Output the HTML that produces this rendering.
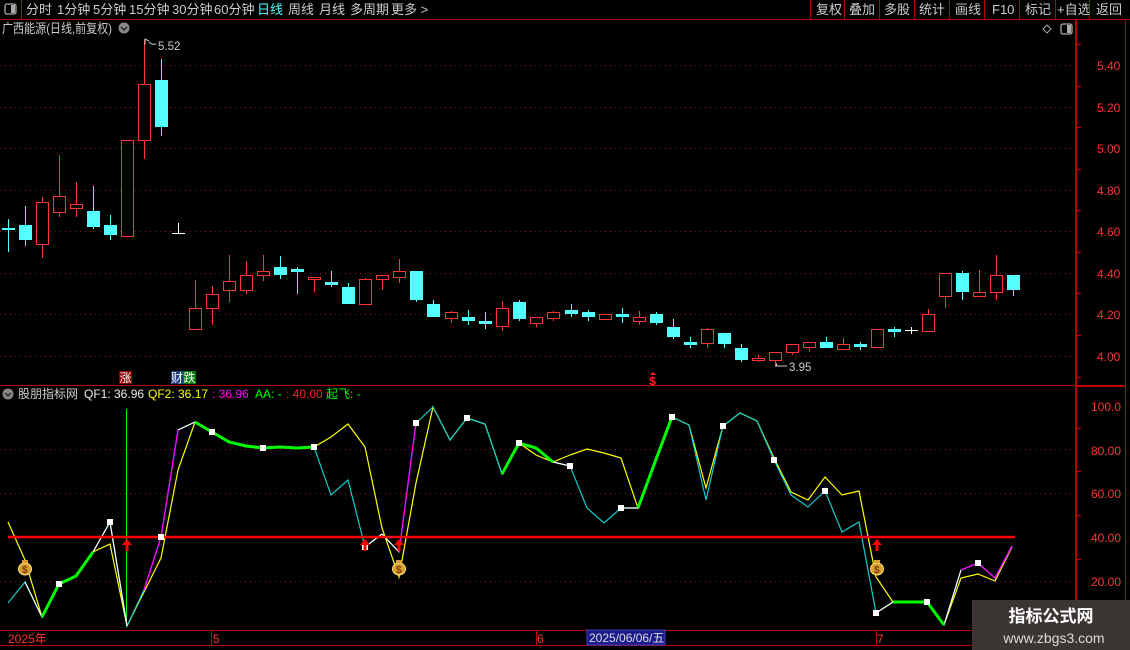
<!DOCTYPE html>
<html><head><meta charset="utf-8"><style>
body{margin:0;background:#000;width:1130px;height:650px;overflow:hidden;font-family:"Liberation Sans","Noto Sans CJK SC",sans-serif}
svg{position:absolute;left:0;top:0}
.t{font-family:"Liberation Sans","Noto Sans CJK SC",sans-serif}
</style></head><body>
<svg id="s" width="1130" height="650" xmlns="http://www.w3.org/2000/svg">
<rect x="0" y="0" width="1130" height="19" fill="#000"/>
<line x1="0" y1="19.5" x2="1130" y2="19.5" stroke="#b00" />
<line x1="21.5" y1="0" x2="21.5" y2="19" stroke="#b00"/>
<rect x="5" y="4" width="11" height="10" rx="2" fill="none" stroke="#aaa" stroke-width="1.3"/>
<rect x="11" y="5" width="4" height="8" fill="#aaa"/>
<g class="t" font-size="13" fill="#ccc">
<text x="26" y="14">分时</text><text x="57" y="14">1分钟</text><text x="93" y="14">5分钟</text><text x="129" y="14">15分钟</text><text x="172" y="14">30分钟</text><text x="214" y="14">60分钟</text>
<text x="257" y="14" fill="#4ff">日线</text><text x="288" y="14">周线</text><text x="319" y="14">月线</text><text x="350" y="14">多周期</text><text x="391" y="14">更多 &gt;</text>
<text x="816" y="14">复权</text><text x="849" y="14">叠加</text><text x="884" y="14">多股</text><text x="919" y="14">统计</text><text x="955" y="14">画线</text><text x="992" y="14">F10</text><text x="1025" y="14">标记</text><text x="1057" y="14">+自选</text><text x="1096" y="14">返回</text>
</g>
<g stroke="#b00"><line x1="810.5" y1="0" x2="810.5" y2="19"/><line x1="844.5" y1="0" x2="844.5" y2="19"/><line x1="879.5" y1="0" x2="879.5" y2="19"/><line x1="914.5" y1="0" x2="914.5" y2="19"/><line x1="949.5" y1="0" x2="949.5" y2="19"/><line x1="984.5" y1="0" x2="984.5" y2="19"/><line x1="1019.5" y1="0" x2="1019.5" y2="19"/><line x1="1055.5" y1="0" x2="1055.5" y2="19"/><line x1="1089.5" y1="0" x2="1089.5" y2="19"/></g>
<text x="2" y="33" class="t" font-size="13" fill="#ccc" textLength="110" lengthAdjust="spacingAndGlyphs">广西能源(日线,前复权)</text>
<circle cx="124" cy="28" r="5.5" fill="#888"/><path d="M121 27 L124 30 L127 27" stroke="#222" stroke-width="1.5" fill="none"/>
<path d="M1047 25 L1051 29 L1047 33 L1043 29Z" fill="none" stroke="#aaa"/>
<rect x="1061" y="24" width="11" height="10" rx="2" fill="none" stroke="#aaa" stroke-width="1.3"/><rect x="1067" y="25" width="4" height="8" fill="#aaa"/>
<g shape-rendering="crispEdges">
<line x1="1076" y1="20" x2="1076" y2="650" stroke="#b00" stroke-width="2"/>
<line x1="1125.5" y1="20" x2="1125.5" y2="650" stroke="#b00"/>
<line x1="0" y1="385.5" x2="1076" y2="385.5" stroke="#b00"/>
<line x1="1076" y1="386" x2="1125" y2="386" stroke="#b00" stroke-width="2"/>
<line x1="0" y1="630.5" x2="1076" y2="630.5" stroke="#b00"/>
<line x1="0" y1="645.5" x2="1076" y2="645.5" stroke="#b00"/>
</g>
<g id="grid" stroke="#8a1a1a" stroke-dasharray="1,4"></g>
<g class="t" font-size="12" fill="#f33">
<text x="1097" y="70">5.40</text><text x="1097" y="112">5.20</text><text x="1097" y="153">5.00</text><text x="1097" y="195">4.80</text><text x="1097" y="236">4.60</text><text x="1097" y="278">4.40</text><text x="1097" y="319">4.20</text><text x="1097" y="361">4.00</text>
<text x="1091" y="411">100.0</text><text x="1091" y="455">80.00</text><text x="1091" y="498">60.00</text><text x="1091" y="542">40.00</text><text x="1091" y="586">20.00</text>
<text x="8" y="643">2025年</text><text x="213" y="643">5</text><text x="537" y="643">6</text><text x="877" y="643">7</text>
</g>
<g stroke="#b00"><line x1="211.5" y1="630" x2="211.5" y2="645"/><line x1="536.5" y1="630" x2="536.5" y2="645"/><line x1="876.5" y1="630" x2="876.5" y2="645"/></g>
<rect x="587" y="630" width="78" height="15" fill="#1a1a8c" stroke="#4040c0"/>
<text x="589" y="642" class="t" font-size="12" fill="#ddd">2025/06/06/五</text>
<g id="ticks" stroke="#b00" shape-rendering="crispEdges"></g>
<g id="c" shape-rendering="crispEdges"></g>
<path d="M145 45 L145 39 L149 41" stroke="#ccc" fill="none"/><path d="M149 42 Q152 45 156 44" stroke="#ccc" fill="none"/>
<text x="158" y="50" class="t" font-size="11.5" fill="#ccc">5.52</text>
<path d="M776 363 L777 366 M775 366 L787 366" stroke="#ccc" fill="none"/>
<text x="789" y="371" class="t" font-size="11.5" fill="#ccc">3.95</text>
<rect x="119" y="371" width="13" height="13" fill="#8b0000"/><text x="119.5" y="382" class="t" font-size="12" fill="#fff">涨</text>
<rect x="171" y="371" width="12" height="13" fill="#1e3c78"/><text x="171" y="382" class="t" font-size="12" fill="#fff">财</text>
<rect x="183" y="371" width="13" height="13" fill="#007a00"/><text x="183.5" y="382" class="t" font-size="12" fill="#fff">跌</text>
<path d="M650 375 L653 372 L656 375Z" fill="#f22"/>
<text x="649" y="385" font-family="Liberation Mono,monospace" font-size="12" font-weight="bold" fill="#f22">$</text>
<circle cx="8" cy="394" r="5.5" fill="#888"/><path d="M5 393 L8 396 L11 393" stroke="#222" stroke-width="1.5" fill="none"/>
<g class="t" font-size="12">
<text x="18" y="398" fill="#ccc">股朋指标网</text>
<text x="84" y="398" fill="#eee">QF1: 36.96</text>
<text x="148" y="398" fill="#ff0">QF2: 36.17</text>
<text x="212" y="398" fill="#f0f">: 36.96</text>
<text x="255" y="398" fill="#0f0">AA: -</text>
<text x="286" y="398" fill="#f22">: 40.00</text>
<text x="326" y="398" fill="#0f0">起飞: -</text>
</g>
<g id="ind"></g>
<rect x="972" y="600" width="158" height="50" fill="#3b3533"/>
<text x="1051" y="622" text-anchor="middle" class="t" font-size="17" font-weight="bold" fill="#fff">指标公式网</text>
<text x="1054" y="643" text-anchor="middle" class="t" font-size="14" fill="#ddd">www.zbgs3.com</text>
</svg>
<script>
var NS="http://www.w3.org/2000/svg";
function el(p,t,a){var e=document.createElementNS(NS,t);for(var k in a)e.setAttribute(k,a[k]);document.getElementById(p).appendChild(e);return e;}
[65,107,148,190,231,273,314,356,449,493,581].forEach(function(y){el('grid','line',{x1:0,y1:y+.5,x2:1076,y2:y+.5});});
[44,86,127,169,210,252,293,335,377,428,471,515,559,603].forEach(function(y){el('ticks','line',{x1:1076,y1:y+.5,x2:1081,y2:y+.5});});
var R='#ff3535',C='#54ffff';
var D=[[8,219,228,229,252,'c'],[25,206,225,240,246,'c'],[42,197,202,244,258,'r'],[59,155,196,212,217,'r'],[76,182,204,208,217,'r'],[93,186,211,227,229,'c'],[110,215,225,235,240,'c'],[127,140,140,236,236,'r'],[144,40,84,140,159,'r'],[161,59,80,127,136,'c'],
[195,280,308,329,329,'r'],[212,286,294,308,325,'r'],[229,255,281,290,302,'r'],[246,261,275,290,294,'r'],[263,255,271,275,281,'r'],[280,256,267,275,279,'c'],[297,267,269,272,294,'c'],[314,277,277,279,292,'r'],[331,271,282,284,287,'c'],[348,283,287,304,304,'c'],[365,278,279,304,304,'r'],
[382,275,275,279,290,'r'],[399,259,271,277,283,'r'],[416,271,271,300,302,'c'],[433,300,304,317,317,'c'],[451,311,312,318,323,'r'],[468,310,317,321,325,'c'],[485,312,321,323,329,'c'],[502,301,308,326,331,'r'],[519,300,302,319,321,'c'],[536,317,317,323,327,'r'],[553,311,312,318,321,'r'],[571,304,310,314,317,'c'],[588,310,312,317,321,'c'],[605,314,314,319,319,'r'],[622,308,314,317,323,'c'],[639,311,317,321,325,'r'],[656,312,314,323,325,'c'],[673,319,327,337,339,'c'],[690,337,342,344,348,'c'],[707,328,329,343,348,'r'],[724,333,333,344,348,'c'],[741,344,348,360,362,'c'],
[758,355,358,360,362,'r'],[775,352,352,360,366,'r'],[792,344,344,352,355,'r'],[809,342,342,347,352,'r'],[826,337,342,348,348,'c'],[843,338,344,349,349,'r'],[860,342,344,346,350,'c'],[877,329,329,347,347,'r'],[894,327,329,331,337,'c'],[928,309,314,331,331,'r'],[945,273,273,296,308,'r'],[962,271,273,292,300,'c'],[979,270,292,296,296,'r'],[996,255,275,292,300,'r'],[1013,275,275,290,296,'c']];
D.forEach(function(d){var x=d[0],col=d[5]=='r'?R:C;
 if(d[1]<d[2])el('c','rect',{x:x,y:d[1],width:1,height:d[2]-d[1],fill:col});
 if(d[4]>d[3])el('c','rect',{x:x,y:d[3],width:1,height:d[4]-d[3],fill:col});
 var h=Math.max(d[3]-d[2],1);
 if(d[5]=='r'){el('c','rect',{x:x-6,y:d[2],width:13,height:h+1,fill:col});el('c','rect',{x:x-5,y:d[2]+1,width:11,height:Math.max(h-1,0),fill:'#000'});}
 else el('c','rect',{x:x-6,y:d[2],width:13,height:h+(h<3?1:0),fill:col});
});
el('c','path',{d:'M178.5 223 V233.5 M172 233.5 H185',stroke:'#fff',fill:'none'});
el('c','path',{d:'M911.5 327 V334 M905 330.5 H918',stroke:'#fff',fill:'none'});
var X=[8,25,42,59,76,93,110,127,144,161,178,195,212,229,246,263,280,297,314,331,348,365,382,399,416,433,450,467,485,502,519,536,553,570,587,604,621,638,655,672,689,706,723,740,757,774,791,808,825,842,859,876,893,910,927,944,961,978,995,1012];
var Y=[522,560,617,584,576,552,544,626,592,558,470,422,432,442,446,448,447,448,447,437,424,447,528,577,483,407,440,418,424,474,443,455,462,455,449,453,458,508,462,417,425,488,426,413,421,458,492,500,477,495,491,577,602,602,602,625,578,574,581,547];
var Q=[603,582,617,584,576,552,522,626,590,537,430,422,432,442,446,448,447,448,447,495,480,547,534,552,423,407,440,418,424,474,443,448,462,466,508,523,508,508,462,417,425,500,426,413,421,460,495,507,491,532,522,613,602,602,602,625,570,563,578,546];
function pl(arr,i0,i1,col,w){var p=[];for(var i=i0;i<=i1;i++)p.push(X[i]+','+arr[i]);el('ind','polyline',{points:p.join(' '),fill:'none',stroke:col,'stroke-width':w||1});}
el('ind','line',{x1:126.5,y1:409,x2:126.5,y2:626,stroke:'#0f0'});
pl(Y,0,59,'#ff0',1.2);
pl(Q,0,59,'#1cc',1.2);
[[1,2],[5,7],[10,11],[21,22],[22,23],[32,33],[36,37],[51,52],[55,56]].forEach(function(s){pl(Q,s[0],s[1],'#fff',1.2);});
[[8,10],[23,24],[56,59]].forEach(function(s){pl(Q,s[0],s[1],'#f0f',1.3);});
[[2,5],[11,18],[29,32],[37,39],[52,55]].forEach(function(s){pl(Q,s[0],s[1],'#0f0',3);});
el('ind','line',{x1:8,y1:537,x2:1015,y2:537,stroke:'#f00','stroke-width':2.5});
[[59,584],[110,522],[212,432],[263,448],[314,447],[365,547],[416,423],[467,418],[519,443],[570,466],[621,508],[672,417],[723,426],[774,460],[825,491],[876,613],[927,602],[978,563],[161,537]].forEach(function(p){el('ind','rect',{x:p[0]-3,y:p[1]-3,width:6,height:6,fill:'#fff'});});
[127,365,399,877].forEach(function(x){el('ind','path',{d:'M'+(x-5)+' 545 L'+x+' 539 L'+(x+5)+' 545 H'+(x+1.5)+' V551 H'+(x-1.5)+' V545Z',fill:'#f00'});});
[25,399,877].forEach(function(x){el('ind','ellipse',{cx:x,cy:569,rx:6.5,ry:6,fill:'#d8a030',stroke:'#ffe080'});el('ind','rect',{x:x-3,y:560,width:6,height:3,fill:'#d8a030'});var t=el('ind','text',{x:x-3,y:573,'font-size':10,'font-weight':'bold',fill:'#7a3a00','font-family':'Liberation Sans,sans-serif'});t.textContent='$';});
</script>
</body></html>
